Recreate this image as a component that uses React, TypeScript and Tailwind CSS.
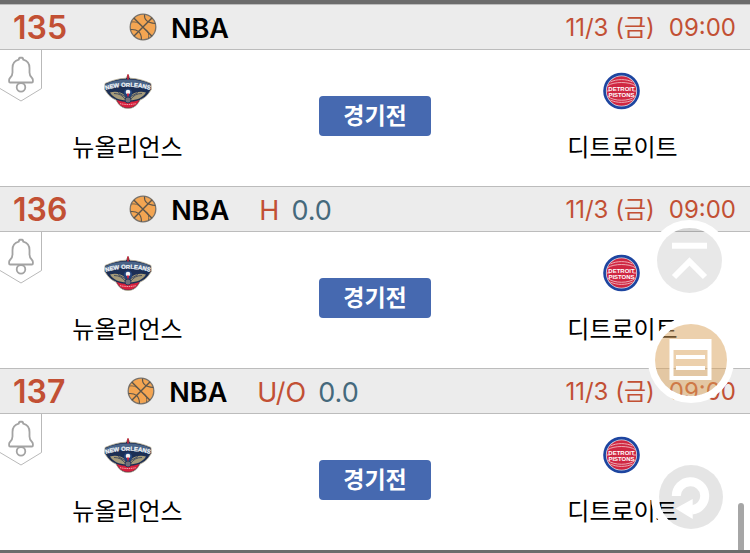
import React from "react";

type Match = {
  no: number;
  league: string;
  market?: string;
  line?: string;
};

const matches: Match[] = [
  { no: 135, league: "NBA" },
  { no: 136, league: "NBA", market: "H", line: "0.0" },
  { no: 137, league: "NBA", market: "U/O", line: "0.0" },
];

function Basketball() {
  return (
    <svg viewBox="0 0 28 28" className="size-7 shrink-0" aria-hidden="true">
      <circle cx="14" cy="14" r="12.8" fill="#f3a552" stroke="#77716a" strokeWidth="1.3" />
      <g fill="none" stroke="#5c554b" strokeWidth="1.4">
        <path d="M4.800 5 23 23.200M23.200 4.800 4.800 23.200" />
        <path d="M15.500 1.500C15 6.500 18 10 26.300 10.500" strokeWidth="1.100" />
        <path d="M1.500 16.500C8 16 12.500 18.500 12.500 26.700" strokeWidth="1.100" />
        <path d="M2.500 9C6 8.500 9 9.500 11.500 11.500M17 16.500C19.500 18.500 20 21.500 19.500 25.500" strokeWidth=".8" />
      </g>
    </svg>
  );
}

function BellTab() {
  return (
    <button type="button" aria-label="알림" className="absolute left-0 top-0 h-[52px] w-[42px]">
      <svg viewBox="0 0 42 52" className="h-[52px] w-[42px]" fill="none" aria-hidden="true">
        <path d="M41.500 0V38.500L21 51 0 38.500" stroke="#b9b9b9" strokeWidth="1" />
        <path
          d="M21 7.500c-1.500 0-2.200 1-2.200 2.200-4 1-6.300 4-6.300 8.300v4.500c0 2.500-.8 4-2.500 5.500-.7.700-.9 1.200-.9 2v1.500c0 .700.300 1 1 1h21.800c.700 0 1-.3 1-1V30c0-.8-.2-1.300-.9-2-1.700-1.500-2.500-3-2.500-5.500V18c0-4.300-2.300-7.300-6.300-8.300 0-1.200-.7-2.200-2.200-2.200Z"
          stroke="#a3a3a3"
          strokeWidth="1.800"
          strokeLinejoin="round"
        />
        <circle cx="21" cy="37.300" r="4.300" stroke="#a3a3a3" strokeWidth="1.800" />
      </svg>
    </button>
  );
}

function PelicansLogo() {
  return (
    <svg viewBox="0 0 48 40" className="h-10 w-12" aria-hidden="true">
      <path d="M24 4.500 26 8.200c8 .3 14 2.300 21 5.300l.3 6-2.800 4c-2 3-5 5-8.500 6.500C33.500 35 29.500 38.500 24 38.500S14.500 35 12 30c-3.500-1.500-6.500-3.500-8.500-6.500l-2.800-4 .3-6C8 10.500 14 8.500 22 8.200Z" fill="#1c2f55" stroke="#b8ad92" strokeWidth=".8" />
      <path d="M1.800 14.200C14 8 34 8 46.200 14.200L45 20C34 14 14 14 3 20Z" fill="#4a6488" />
      <path d="M12.500 30c7 2.500 16 2.500 23 0-2.500 5-6.500 7.800-11.500 7.800S15 35 12.500 30Z" fill="#d8203c" />
      <path d="M16 33.600c5 1.200 11 1.200 16 0" stroke="#f0a0a8" strokeWidth="1" strokeDasharray="1.500 .7" fill="none" />
      <path d="M6 22.500c5-1.500 11-.5 14.500 2.500l2 5.500C15 30 9.500 28 6 22.500ZM42 22.500c-5-1.500-11-.5-14.500 2.500l-2 5.500C33 30 38.500 28 42 22.500Z" fill="#a59a79" />
      <path d="M10 23.500c5 0 8.500 2 11 5.500M38 23.500c-5 0-8.500 2-11 5.500M14 22.500l7 4M34 22.500l-7 4" stroke="#1c2f55" strokeWidth=".7" fill="none" />
      <path d="M24 4.500v5" stroke="#c0283c" strokeWidth="1.800" />
      <path id="pelicans-arc" d="M0 20.500Q24 13 48 20.500" fill="none" />
      <text fontSize="6" fontWeight="700" fill="#f2f5f8" stroke="#f2f5f8" strokeWidth=".2" textAnchor="middle" className="font-['Liberation_Sans_Narrow','Liberation_Sans',sans-serif]">
        <textPath href="#pelicans-arc" startOffset="50%">NEW ORLEANS</textPath>
      </text>
      <ellipse cx="24" cy="23" rx="4.300" ry="4.500" fill="#23447b" />
      <circle cx="24" cy="22" r="2.300" fill="#f4f4f4" />
      <path d="m22.800 23.500 1.200 5.500 1.200-5.500Z" fill="#d8203c" />
      <circle cx="24" cy="30" r="3" fill="#71717a" stroke="#1c2f55" strokeWidth=".8" />
    </svg>
  );
}

function PistonsLogo() {
  return (
    <svg viewBox="0 0 40 40" className="size-10" aria-hidden="true">
      <circle cx="18.500" cy="21" r="18.300" fill="#1d45a0" />
      <circle cx="18.500" cy="21" r="15.600" fill="#d9dce6" />
      <circle cx="18.500" cy="21" r="14.800" fill="#cf2742" />
      <g fill="none" stroke="#f0b8c0" strokeWidth=".9">
        <path d="M7.500 12C13.500 8.800 23.500 8.800 29.500 12M7.500 30C13.500 33.200 23.500 33.200 29.500 30" />
        <path d="M5 15.500C11 11.500 26 11.500 32 15.500M5 26.500C11 31.500 26 31.500 32 26.500" />
        <path d="M4 21h3M30 21h3" />
      </g>
      <g fill="#ffffff" fontSize="6" fontWeight="700" textAnchor="middle" className="font-['Liberation_Sans_Narrow','Liberation_Sans',sans-serif]">
        <text x="18.500" y="20.500">DETROIT</text>
        <text x="18.500" y="26.500">PISTONS</text>
      </g>
    </svg>
  );
}

function Team({ name, children }: { name: string; children: React.ReactNode }) {
  return (
    <div className="flex flex-col items-center gap-5">
      {children}
      <span className="text-2xl leading-9 text-black">{name}</span>
    </div>
  );
}

function MatchRow({ match }: { match: Match }) {
  return (
    <article>
      <header className="flex h-[46px] items-center border-y border-[#bcbcbc] bg-[#ececec] pl-[13px] pr-[14px] text-[#c25034]">
        <span className="pt-0.5 text-[32px] font-semibold leading-none">{match.no}</span>
        <span className="ml-[62px] flex items-center gap-[14px] text-[27px] font-semibold leading-none text-black">
          <Basketball />
          <span className="pt-0.5">{match.league}</span>
        </span>
        {match.market && (
          <span className="ml-[30px] flex gap-3 pt-0.5 text-[27px] leading-none">
            <span>{match.market}</span>
            <span className="text-[#45697c]">{match.line}</span>
          </span>
        )}
        <time className="ml-auto flex gap-[14px] pt-0.5 text-2xl leading-none">
          <span>11/3 (금)</span>
          <span>09:00</span>
        </time>
      </header>
      <div className="relative grid grid-cols-[34%_32%_34%] bg-white py-5">
        <BellTab />
        <Team name="뉴올리언스">
          <PelicansLogo />
        </Team>
        <button type="button" className="mb-1 h-10 w-28 place-self-center rounded bg-[#4669b0] text-[23px] font-bold leading-none text-white">
          경기전
        </button>
        <Team name="디트로이트">
          <PistonsLogo />
        </Team>
      </div>
    </article>
  );
}

function FloatingButtons() {
  return (
    <nav className="absolute right-4 top-[220px] flex w-[86px] flex-col items-center">
      <button type="button" aria-label="맨 위로" className="h-20 w-full">
        <svg viewBox="0 0 86 80" className="h-20 w-full" aria-hidden="true">
          <circle cx="41.500" cy="40.500" r="36.500" fill="none" stroke="#fff" strokeWidth="8" />
          <circle cx="41.500" cy="40.500" r="32.500" fill="#000" fillOpacity=".09" />
          <path d="M24 25.800H59" stroke="#fff" strokeWidth="6" />
          <path d="M26 57 41.500 41.500 57 57" fill="none" stroke="#fff" strokeWidth="6" />
        </svg>
      </button>
      <button type="button" aria-label="목록" className="mt-[17px] h-[86px] w-full">
        <svg viewBox="0 0 86 86" className="h-[86px] w-full" aria-hidden="true">
          <circle cx="43" cy="43" r="39.500" fill="none" stroke="#fff" strokeWidth="7" />
          <circle cx="43" cy="43" r="36" fill="#d9a159" fillOpacity=".5" />
          <path d="M21.500 22H63.500V63H21.500ZM25.500 33V59H59.500V33Z" fill="#fff" fillRule="evenodd" />
          <path d="M28 40H57M28 51H57" stroke="#fff" strokeWidth="4" />
        </svg>
      </button>
      <button type="button" aria-label="새로고침" className="mt-[54px] h-20 w-full">
        <svg viewBox="0 0 86 80" className="h-20 w-full" aria-hidden="true">
          <circle cx="43" cy="40" r="36" fill="none" stroke="#fff" strokeWidth="8" />
          <circle cx="43" cy="40" r="32" fill="#000" fillOpacity=".1" />
          <path d="M28.300 39A14.200 14.200 0 1 1 44 53" fill="none" stroke="#fff" strokeWidth="9" />
          <path d="M27.500 51.500 44.700 42V62Z" fill="#fff" />
        </svg>
      </button>
    </nav>
  );
}

export default function App() {
  return (
    <main className="relative overflow-hidden border-b-[3px] border-t-4 border-[#6c6c6c] bg-white font-['Inter','Noto_Sans_CJK_KR',sans-serif]">
      {matches.map((match) => (
        <MatchRow key={match.no} match={match} />
      ))}
      <div className="absolute inset-x-0 -top-1 bottom-0">
        <FloatingButtons />
        <div className="absolute -bottom-1 right-1.5 h-[51px] w-1.5 rounded-t-full bg-black/35" />
      </div>
    </main>
  );
}
